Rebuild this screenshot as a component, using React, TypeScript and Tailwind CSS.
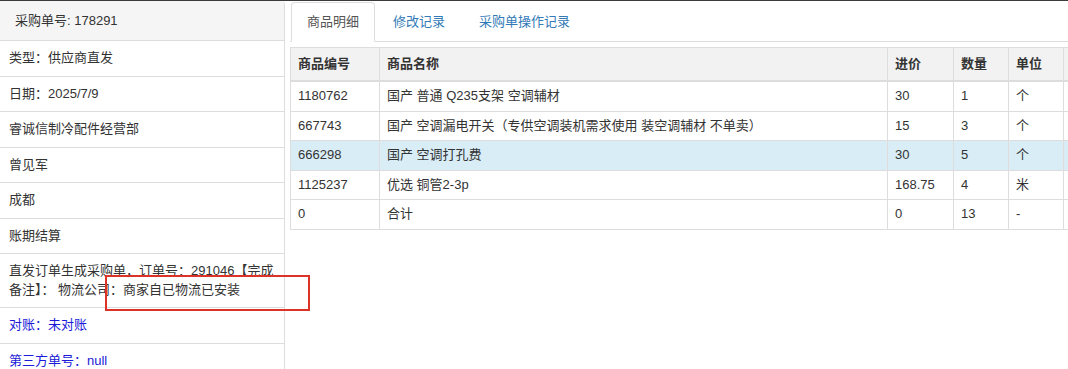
import React from 'react';

const infoRows = [
  { text: '类型：供应商直发' },
  { text: '日期：2025/7/9' },
  { text: '睿诚信制冷配件经营部' },
  { text: '曾见军' },
  { text: '成都' },
  { text: '账期结算' },
  { text: '直发订单生成采购单，订单号：291046【完成备注】： 物流公司：商家自已物流已安装' },
  { text: '对账：未对账', blue: true },
  { text: '第三方单号：null', blue: true },
];

const items = [
  { code: '1180762', name: '国产 普通 Q235支架 空调辅材', price: '30', qty: '1', unit: '个' },
  { code: '667743', name: '国产 空调漏电开关（专供空调装机需求使用 装空调辅材 不单卖）', price: '15', qty: '3', unit: '个' },
  { code: '666298', name: '国产 空调打孔费', price: '30', qty: '5', unit: '个', active: true },
  { code: '1125237', name: '优选 铜管2-3p', price: '168.75', qty: '4', unit: '米' },
  { code: '0', name: '合计', price: '0', qty: '13', unit: '-' },
];

const tabs = ['商品明细', '修改记录', '采购单操作记录'];

export default function App() {
  return (
    <div
      className="relative h-[369px] w-[1068px] overflow-hidden bg-white text-[13px] text-[#333]"
      style={{ fontFamily: '"Liberation Sans", "Noto Sans CJK SC", sans-serif' }}
    >
      <div className="h-px bg-[#3a3a3a]" />
      <div className="flex">
        {/* left info panel */}
        <div className="w-[285px] shrink-0 rounded-tr-[4px] border-r border-[#ddd]">
          <div className="flex h-[40px] items-center rounded-tr-[4px] border-b border-[#ddd] bg-[#f5f5f5] px-[15px] leading-[18px]">
            采购单号: 178291
          </div>
          {infoRows.map((row, i) => (
            <div
              key={i}
              className={`border-b border-[#ddd] px-[9px] py-2 leading-[18.5px] ${
                row.blue ? 'text-[#1a1ad8]' : ''
              }`}
            >
              {row.text}
            </div>
          ))}
        </div>

        {/* right content */}
        <div className="min-w-0 flex-1 overflow-hidden pl-[5px]">
          <ul className="flex gap-[2px] border-b border-[#ddd] pt-px pl-px">
            {tabs.map((tab, i) => (
              <li
                key={tab}
                className={`-mb-px rounded-t-[4px] border px-[15px] py-[10px] leading-[18px] ${
                  i === 0
                    ? 'border-[#ddd] border-b-white bg-white text-[#555]'
                    : 'border-transparent text-[#337ab7]'
                }`}
              >
                {tab}
              </li>
            ))}
          </ul>

          <table className="mt-[5px] w-[840px] table-fixed border-collapse border border-[#ddd]">
            <colgroup>
              <col className="w-[89px]" />
              <col className="w-[508px]" />
              <col className="w-[66px]" />
              <col className="w-[55px]" />
              <col className="w-[55px]" />
              <col className="w-[67px]" />
            </colgroup>
            <thead>
              <tr className="bg-[#f2f2f2]">
                {['商品编号', '商品名称', '进价', '数量', '单位', ''].map((h, i) => (
                  <th
                    key={i}
                    className="border border-b-2 border-[#ddd] px-[7px] py-[7px] text-left font-bold leading-[18px]"
                  >
                    {h}
                  </th>
                ))}
              </tr>
            </thead>
            <tbody>
              {items.map((it) => (
                <tr key={it.code} className={it.active ? 'bg-[#d9edf7]' : ''}>
                  <td className="border border-[#ddd] px-[7px] py-[5px] leading-[18.5px]">{it.code}</td>
                  <td className="border border-[#ddd] px-[7px] py-[5px] leading-[18.5px]">{it.name}</td>
                  <td className="border border-[#ddd] px-[7px] py-[5px] leading-[18.5px]">{it.price}</td>
                  <td className="border border-[#ddd] px-[7px] py-[5px] leading-[18.5px]">{it.qty}</td>
                  <td className="border border-[#ddd] px-[7px] py-[5px] leading-[18.5px]">{it.unit}</td>
                  <td className="border border-[#ddd] px-[7px] py-[5px] leading-[18.5px]" />
                </tr>
              ))}
            </tbody>
          </table>
        </div>
      </div>

      {/* highlight box */}
      <div className="absolute left-[105px] top-[275px] h-[36px] w-[205px] border-2 border-[#dc3228]" />
    </div>
  );
}
